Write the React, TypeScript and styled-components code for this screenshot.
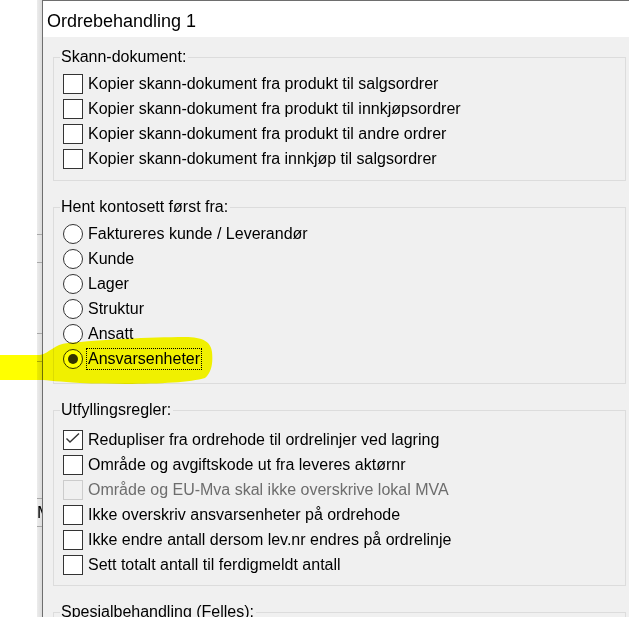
import React from "react";
import styled, { createGlobalStyle } from "styled-components";

const GlobalStyle = createGlobalStyle`
  html, body {
    margin: 0;
    padding: 0;
    background: #fff;
  }
  body {
    font-family: "Liberation Sans", Arial, sans-serif;
    overflow: hidden;
  }
`;

const Screen = styled.div`
  position: relative;
  isolation: isolate;
  width: 629px;
  height: 617px;
  display: flex;
  overflow: hidden;
  background: #fff;
`;

const BackWindow = styled.div`
  width: 37px;
  flex: none;
  background: #fff;
`;

const Shadow = styled.div`
  width: 5px;
  flex: none;
  display: flex;
  flex-direction: column;
  overflow: hidden;
  background: linear-gradient(to right, #ececec, #dcdcdc);
`;

const ShadowRow = styled.div<{ $h: number }>`
  height: ${p => p.$h}px;
  flex: none;
  border-bottom: 1px solid #a8a8a8;
  font-size: 17px;
  line-height: ${p => p.$h}px;
  color: #000;
  white-space: nowrap;
`;

const Dialog = styled.div`
  flex: 1;
  display: flex;
  flex-direction: column;
  min-width: 0;
  border-left: 1px solid #6e6e6e;
  border-top: 1px solid #6e6e6e;
  background: #f0f0f0;
`;

const TitleBar = styled.div`
  height: 36px;
  box-sizing: border-box;
  flex: none;
  padding: 10px 0 0 4px;
  background: #fff;
  font-size: 18px;
  line-height: 20px;
  color: #000;
`;

const Body = styled.div`
  flex: 1;
  display: flex;
  flex-direction: column;
  gap: 17px;
  padding: 11px 3px 0 10px;
  overflow: hidden;
`;

const Group = styled.fieldset<{ $padTop: number; $padBottom: number }>`
  margin: 0;
  min-inline-size: 0;
  padding: ${p => p.$padTop}px 0 ${p => p.$padBottom}px 9px;
  border: 1px solid #dcdcdc;
  flex: none;
`;

const Legend = styled.legend`
  margin-left: -3px;
  padding: 0 2px 0 1px;
  font-size: 16px;
  line-height: 18px;
  color: #000;
`;

const Row = styled.div`
  height: 25px;
  display: flex;
  align-items: center;
`;

const Box = styled.span<{ $disabled?: boolean }>`
  width: 20px;
  height: 20px;
  box-sizing: border-box;
  flex: none;
  display: flex;
  align-items: center;
  justify-content: center;
  border: 1px solid ${p => (p.$disabled ? "#cccccc" : "#333333")};
  background: ${p => (p.$disabled ? "#f0f0f0" : "#fff")};
`;

const Radio = styled.span<{ $checked?: boolean }>`
  width: 20px;
  height: 20px;
  box-sizing: border-box;
  flex: none;
  display: flex;
  align-items: center;
  justify-content: center;
  border: 1.4px solid #333;
  border-radius: 50%;
  background: #fff;

  &::after {
    content: "";
    display: ${p => (p.$checked ? "block" : "none")};
    width: 10px;
    height: 10px;
    border-radius: 50%;
    background: #333;
  }
`;

const Label = styled.span<{ $focus?: boolean; $disabled?: boolean }>`
  margin-left: ${p => (p.$focus ? 3 : 5)}px;
  padding: ${p => (p.$focus ? "1px 1px" : "0")};
  border: ${p => (p.$focus ? "1px dotted #000" : "none")};
  font-size: 16px;
  line-height: 18px;
  white-space: nowrap;
  color: ${p => (p.$disabled ? "#6d6d6d" : "#000")};
`;

const Marker = styled.svg`
  position: absolute;
  left: 0;
  top: 0;
  pointer-events: none;
  mix-blend-mode: multiply;
`;

interface CheckItem {
  text: string;
  checked?: boolean;
  disabled?: boolean;
}

const Check: React.FC<{ item: CheckItem }> = ({ item }) => (
  <Row>
    <Box $disabled={item.disabled}>
      {item.checked && (
        <svg width="18" height="18" viewBox="0 0 18 18">
          <polyline
            points="2.5,7.5 6,11 15,2.5"
            fill="none"
            stroke="#333"
            strokeWidth="1.4"
          />
        </svg>
      )}
    </Box>
    <Label $disabled={item.disabled}>{item.text}</Label>
  </Row>
);

const scanItems: CheckItem[] = [
  { text: "Kopier skann-dokument fra produkt til salgsordrer" },
  { text: "Kopier skann-dokument fra produkt til innkjøpsordrer" },
  { text: "Kopier skann-dokument fra produkt til andre ordrer" },
  { text: "Kopier skann-dokument fra innkjøp til salgsordrer" },
];

const accountSources = [
  "Faktureres kunde / Leverandør",
  "Kunde",
  "Lager",
  "Struktur",
  "Ansatt",
  "Ansvarsenheter",
];

const fillRules: CheckItem[] = [
  { text: "Redupliser fra ordrehode til ordrelinjer ved lagring", checked: true },
  { text: "Område og avgiftskode ut fra leveres aktørnr" },
  { text: "Område og EU-Mva skal ikke overskrive lokal MVA", disabled: true },
  { text: "Ikke overskriv ansvarsenheter på ordrehode" },
  { text: "Ikke endre antall dersom lev.nr endres på ordrelinje" },
  { text: "Sett totalt antall til ferdigmeldt antall" },
];

const shadowRows = [234, 27, 70, 27, 136, 27];

export default function App() {
  const [source, setSource] = React.useState("Ansvarsenheter");

  return (
    <Screen>
      <GlobalStyle />
      <BackWindow />
      <Shadow>
        {shadowRows.map((h, i) => (
          <ShadowRow key={i} $h={h}>
            {i === 5 ? "M" : null}
          </ShadowRow>
        ))}
      </Shadow>
      <Dialog>
        <TitleBar>Ordrebehandling 1</TitleBar>
        <Body>
          <Group $padTop={5} $padBottom={9}>
            <Legend>Skann-dokument:</Legend>
            {scanItems.map(item => (
              <Check key={item.text} item={item} />
            ))}
          </Group>

          <Group $padTop={5} $padBottom={12}>
            <Legend>Hent kontosett først fra:</Legend>
            {accountSources.map(name => (
              <Row key={name} onClick={() => setSource(name)}>
                <Radio $checked={source === name} />
                <Label $focus={source === name}>{name}</Label>
              </Row>
            ))}
          </Group>

          <Group $padTop={8} $padBottom={8}>
            <Legend>Utfyllingsregler:</Legend>
            {fillRules.map(item => (
              <Check key={item.text} item={item} />
            ))}
          </Group>

          <Group $padTop={5} $padBottom={9}>
            <Legend>Spesialbehandling (Felles):</Legend>
            <Check item={{ text: "" }} />
          </Group>
        </Body>
      </Dialog>

      <Marker width="629" height="617" viewBox="0 0 629 617">
        <path
          d="M0,355 L40,355 C50,353 54,344 68,343 C100,340 150,337 185,337
             C203,337 211,342 212,352 C213,362 212,372 205,378
             C185,384 130,385 80,383 C60,382 48,380 40,380 L0,380 Z"
          fill="#ffff00"
        />
      </Marker>
    </Screen>
  );
}
